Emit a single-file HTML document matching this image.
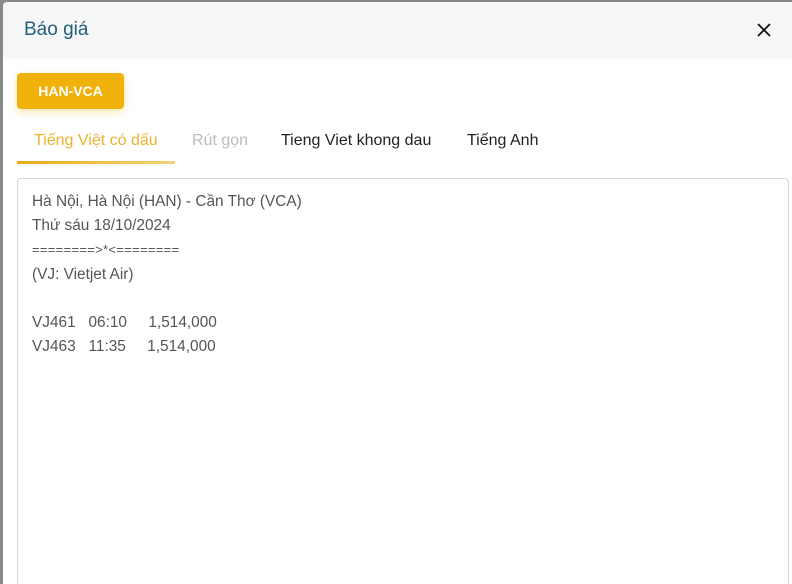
<!DOCTYPE html>
<html><head><meta charset="utf-8"><style>
*{margin:0;padding:0;box-sizing:border-box}
html,body{width:792px;height:584px;overflow:hidden}
body{background:#888;font-family:"Liberation Sans","DejaVu Sans",sans-serif;position:relative}
.modal{position:absolute;left:3px;top:2px;width:789px;height:582px;background:#fff;border-top-left-radius:4px;overflow:hidden}
.hdr{position:absolute;left:0;top:0;width:789px;height:57px;background:#f7f7f7}
.title{position:absolute;left:21px;top:17px;font-size:19px;color:#1e5f7a}
.x{position:absolute;left:754px;top:21px}
.btn{position:absolute;left:14px;top:71px;width:107px;height:36px;background:#f0b10a;border-radius:4px;color:#fff;font-weight:bold;font-size:14px;text-align:center;line-height:36px;box-shadow:0 3px 8px rgba(240,177,10,0.35)}
.tab{position:absolute;top:130px;font-size:16px;color:#222}
.ul{position:absolute;left:14px;top:159px;width:158px;height:3px;background:linear-gradient(90deg,#e8ad16,#f3d27c)}
.ta{position:absolute;left:14px;top:176px;width:772px;height:420px;border:1px solid #d6d6d6;border-radius:4px}
.txt{position:absolute;left:29px;top:188px;font-size:15.4px;line-height:24.2px;color:#555;white-space:pre}
.txt div{height:24.2px}
</style></head><body>
<div class="modal">
<div class="hdr"></div>
<div class="title">Báo giá</div>
<svg class="x" width="14" height="14" viewBox="0 0 14 14"><path d="M1 1L13 13M13 1L1 13" stroke="#111" stroke-width="1.8"/></svg>
<div class="btn">HAN-VCA</div>
<div class="tab" style="left:31px;color:#ecb22d">Tiếng Việt có dấu</div>
<div class="tab" style="left:189px;color:#bbb">Rút gọn</div>
<div class="tab" style="left:278px">Tieng Viet khong dau</div>
<div class="tab" style="left:464px">Tiếng Anh</div>
<div class="ul"></div>
<div class="ta"></div>
<div class="txt"><div>Hà Nội, Hà Nội (HAN) - Cần Thơ (VCA)</div><div>Thứ sáu 18/10/2024</div><div style="font-size:13px;letter-spacing:0.3px">========&gt;*&lt;========</div><div>(VJ: Vietjet Air)</div><div></div><div>VJ461   06:10     1,514,000</div><div>VJ463   11:35     1,514,000</div></div>
</div>
</body></html>
